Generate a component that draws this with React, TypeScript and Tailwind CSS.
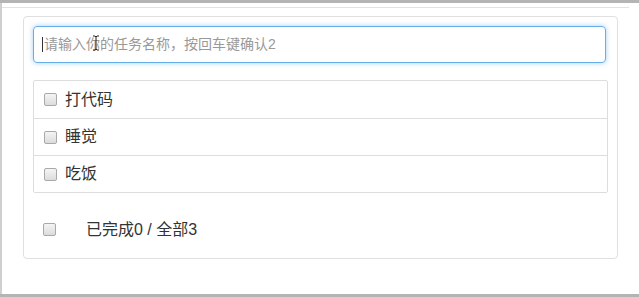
import React from 'react';

const font = { fontFamily: '"Liberation Sans", "Noto Sans CJK SC", sans-serif' };

const tasks = ['打代码', '睡觉', '吃饭'];

function Box() {
  return (
    <span className="block w-[13px] h-[13px] shrink-0 rounded-[2px] border border-[#a9a9a9] bg-gradient-to-b from-[#f4f4f4] to-[#dcdcdc]" />
  );
}

export default function App() {
  return (
    <div className="w-[639px] h-[297px] bg-white flex flex-col overflow-hidden" style={font}>
      <div className="h-[3px] bg-[#b4b4b4] shrink-0" />
      <div className="flex-1 flex border-l-2 border-[#cfcfcf]">
        <div className="flex-1 flex flex-col">
          <div className="h-[4px]" />
          <div className="h-px bg-[#e2e2e2] mr-[10px]" />
          <div className="pt-[8px] pl-[21px] pr-[21px]">
            <div className="border border-[#e0e0e0] rounded-[4px] p-[9px] pb-[10px]">
              <div className="relative mr-[2px] h-[37px] rounded-[4px] border border-[#66afe9] shadow-[0_0_5px_rgba(102,175,233,0.6)] flex items-center pl-[8px]">
                <span className="w-px h-[15px] bg-[#333] mr-px" />
                <span className="text-[14px] text-[#999]">请输入你的任务名称，按回车键确认2</span>
                <svg className="absolute left-[58px] top-[8px]" width="8" height="16" viewBox="0 0 8 16">
                  <path d="M1 1h2l1 1 1-1h2M4 2v12M1 15h2l1-1 1 1h2" fill="none" stroke="#222" strokeWidth="1" />
                </svg>
              </div>
              <ul className="mt-[17px] border border-[#dddddd] rounded-[2px]">
                {tasks.map((t, i) => (
                  <li
                    key={t}
                    className={`h-[37px] flex items-center pl-[10px] gap-[8px] ${i > 0 ? 'border-t border-[#dddddd]' : ''}`}
                  >
                    <Box />
                    <span className="text-[16px] text-[#333]">{t}</span>
                  </li>
                ))}
              </ul>
              <div className="mt-[18px] h-[37px] flex items-center pl-[10px]">
                <Box />
                <span className="ml-[30px] text-[16px] text-[#333]">已完成0 / 全部3</span>
              </div>
            </div>
          </div>
        </div>
      </div>
      <div className="h-[3px] bg-[#b4b4b4] shrink-0" />
    </div>
  );
}
